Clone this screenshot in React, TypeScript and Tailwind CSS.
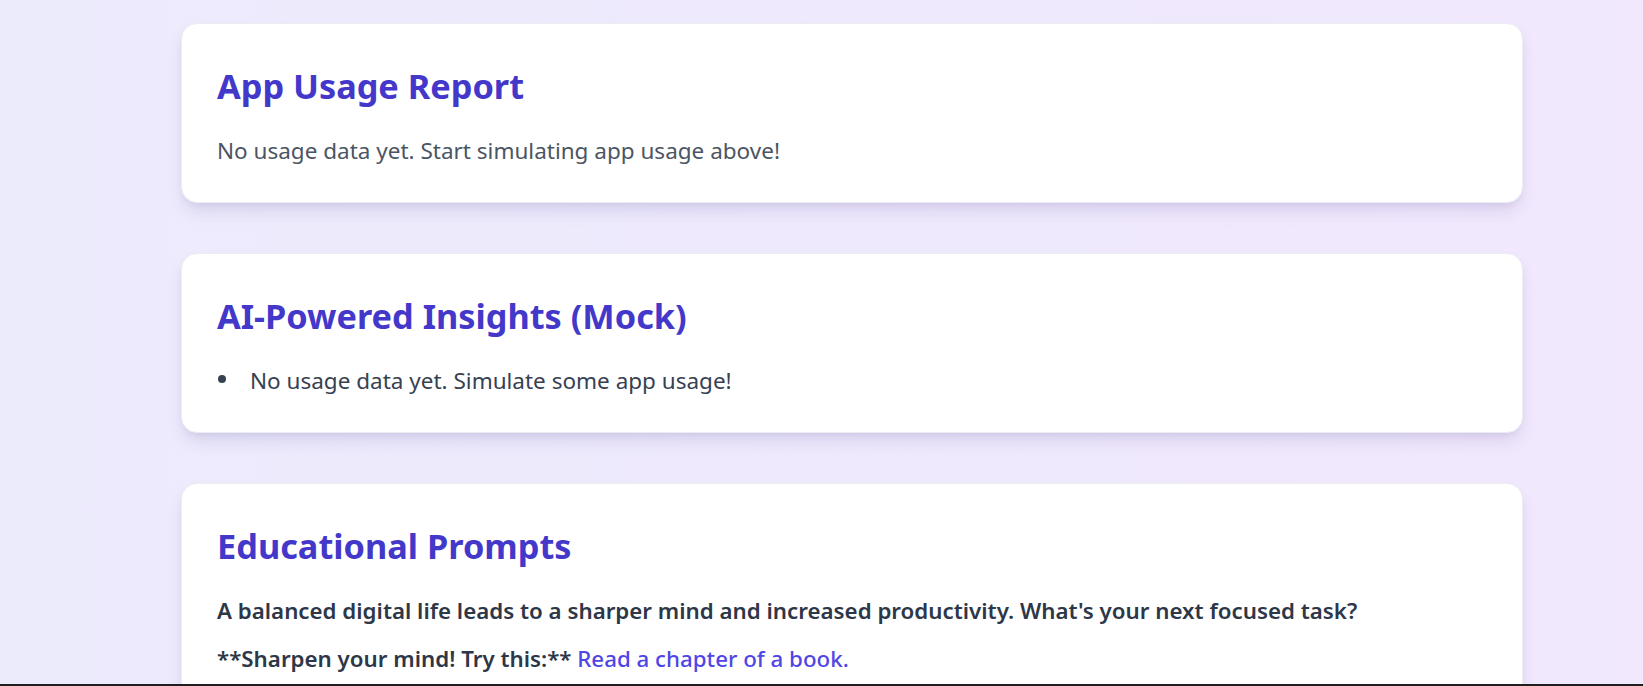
import React from 'react'

const font = { fontFamily: '"Noto Sans", "Open Sans", sans-serif' }

function Card({ title, children }: { title: string; children: React.ReactNode }) {
  return (
    <section className="h-[180px] shrink-0 rounded-2xl border border-[#ececf3] bg-white px-[35px] pt-10 pb-[35px] shadow-[0_10px_18px_-4px_rgba(76,60,140,0.16),0_4px_8px_-4px_rgba(76,60,140,0.1)]">
      <h2 className="text-[34.3px] leading-[43px] font-bold text-[#4338ca]">{title}</h2>
      <div className="mt-[26px]">{children}</div>
    </section>
  )
}

export default function App() {
  return (
    <div className="flex h-[686px] flex-col overflow-hidden" style={font}>
      <main className="flex min-h-0 flex-1 flex-col gap-[50px] overflow-hidden bg-gradient-to-r from-[#ecebfc] to-[#f1e8fd] pt-[23px] pr-[120px] pl-[181px]">
        <Card title="App Usage Report">
          <p className="text-[22.5px] leading-9 text-[#4b5563]">
            No usage data yet. Start simulating app usage above!
          </p>
        </Card>

        <Card title="AI-Powered Insights (Mock)">
          <ul className="text-[22.5px] leading-9 text-[#374151]">
            <li className="flex items-center">
              <span className="mr-[24px] ml-[1px] h-[8px] w-[8px] shrink-0 -translate-y-[2px] rounded-full bg-[#374151]" />
              No usage data yet. Simulate some app usage!
            </li>
          </ul>
        </Card>

        <section className="shrink-0 rounded-2xl border border-[#ececf3] bg-white px-[35px] pt-10 pb-[35px] shadow-[0_10px_18px_-4px_rgba(76,60,140,0.16),0_4px_8px_-4px_rgba(76,60,140,0.1)]">
          <h2 className="text-[34.3px] leading-[43px] font-bold text-[#4338ca]">Educational Prompts</h2>
          <div className="mt-[26px] flex flex-col gap-3 text-[22.3px] leading-9 font-semibold text-[#2d3748]">
            <p>
              A balanced digital life leads to a sharper mind and increased productivity. What's your next focused
              task?
            </p>
            <p>
              **Sharpen your mind! Try this:** <span className="font-medium text-[#4f46e5]">Read a chapter of a book.</span>
            </p>
          </div>
        </section>
      </main>
      <div className="h-[2px] shrink-0 bg-[#1f1f1f]" />
    </div>
  )
}
